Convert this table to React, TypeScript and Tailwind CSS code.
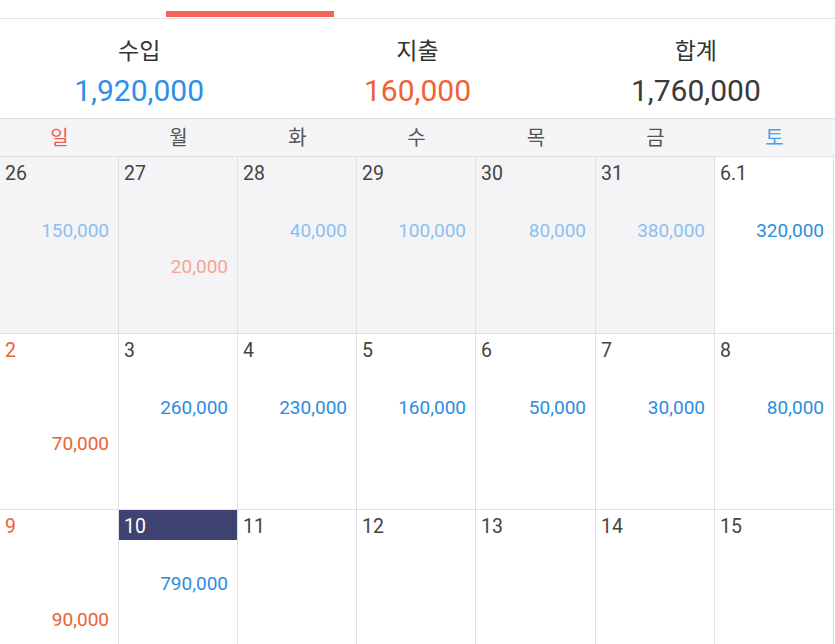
import React from "react";

type Cell = {
  day: string;
  inc?: string;
  exp?: string;
  prev?: boolean;
  today?: boolean;
};

const rows: Cell[][] = [
  [
    { day: "26", inc: "150,000", prev: true },
    { day: "27", exp: "20,000", prev: true },
    { day: "28", inc: "40,000", prev: true },
    { day: "29", inc: "100,000", prev: true },
    { day: "30", inc: "80,000", prev: true },
    { day: "31", inc: "380,000", prev: true },
    { day: "6.1", inc: "320,000" },
  ],
  [
    { day: "2", exp: "70,000" },
    { day: "3", inc: "260,000" },
    { day: "4", inc: "230,000" },
    { day: "5", inc: "160,000" },
    { day: "6", inc: "50,000" },
    { day: "7", inc: "30,000" },
    { day: "8", inc: "80,000" },
  ],
  [
    { day: "9", exp: "90,000" },
    { day: "10", inc: "790,000", today: true },
    { day: "11" },
    { day: "12" },
    { day: "13" },
    { day: "14" },
    { day: "15" },
  ],
];

const weekdays = ["일", "월", "화", "수", "목", "금", "토"];

function DayCell({ c, col }: { c: Cell; col: number }) {
  const isSun = col === 0;
  const numColor = c.today
    ? "text-white bg-[#3e4372]"
    : isSun && !c.prev
    ? "text-[#ea6137]"
    : "text-[#444444]";
  return (
    <div
      className={`flex flex-col border-r border-[#e0e0e0] ${
        c.prev ? "bg-[#f4f4f7]" : "bg-white"
      }`}
    >
      <div
        className={`h-[30px] pl-[5px] pt-[3px] flex items-center text-[19.5px] ${numColor}`}
      >
        {c.day}
      </div>
      <div className="h-[26px]" />
      <div
        className={`h-[36px] pr-[9px] flex items-center justify-end text-[19px] ${
          c.prev ? "text-[#8cc0f0]" : "text-[#2b8de0]"
        }`}
      >
        {c.inc ?? ""}
      </div>
      <div
        className={`h-[36px] pr-[9px] flex items-center justify-end text-[19px] ${
          c.prev ? "text-[#f4a592]" : "text-[#ea6137]"
        }`}
      >
        {c.exp ?? ""}
      </div>
    </div>
  );
}

const rowHeights = ["h-[177px]", "h-[176px]", "h-[177px]"];

export default function App() {
  return (
    <div
      className="w-[835px] h-[644px] overflow-hidden bg-white"
      style={{ fontFamily: 'Roboto, "Noto Sans CJK KR", sans-serif' }}
    >
      {/* top tab indicator */}
      <div className="h-[19px] pt-[11px] border-b border-[#e3e3e3]">
        <div className="ml-[166px] w-[168px] h-[6px] bg-[#f4645a]" />
      </div>

      {/* summary */}
      <div className="h-[99px] grid grid-cols-3 pt-[18px]">
        <div className="flex flex-col items-center">
          <div className="text-[23px] leading-[30px] text-[#333333]">수입</div>
          <div className="mt-[6px] text-[30px] leading-[36px] text-[#2d8fe6]">
            1,920,000
          </div>
        </div>
        <div className="flex flex-col items-center">
          <div className="text-[23px] leading-[30px] text-[#333333]">지출</div>
          <div className="mt-[6px] text-[30px] leading-[36px] text-[#ee6236]">
            160,000
          </div>
        </div>
        <div className="flex flex-col items-center">
          <div className="text-[23px] leading-[30px] text-[#333333]">합계</div>
          <div className="mt-[6px] text-[30px] leading-[36px] text-[#3a3a3a]">
            1,760,000
          </div>
        </div>
      </div>

      {/* weekday header */}
      <div className="grid grid-cols-[119px_119px_119px_119px_120px_119px_119px] h-[39px] pt-[1px] bg-[#f5f5f7] border-t border-b border-[#e0e0e0]">
        {weekdays.map((w, i) => (
          <div
            key={w}
            className={`flex items-center justify-center text-[20px] ${
              i === 0
                ? "text-[#f0605a]"
                : i === 6
                ? "text-[#4aa0ea]"
                : "text-[#555555]"
            }`}
          >
            {w}
          </div>
        ))}
      </div>

      {/* calendar rows */}
      {rows.map((r, ri) => (
        <div
          key={ri}
          className={`grid grid-cols-[119px_119px_119px_119px_120px_119px_119px] border-b border-[#e0e0e0] ${rowHeights[ri]}`}
        >
          {r.map((c, ci) => (
            <DayCell key={ci} c={c} col={ci} />
          ))}
        </div>
      ))}
    </div>
  );
}
